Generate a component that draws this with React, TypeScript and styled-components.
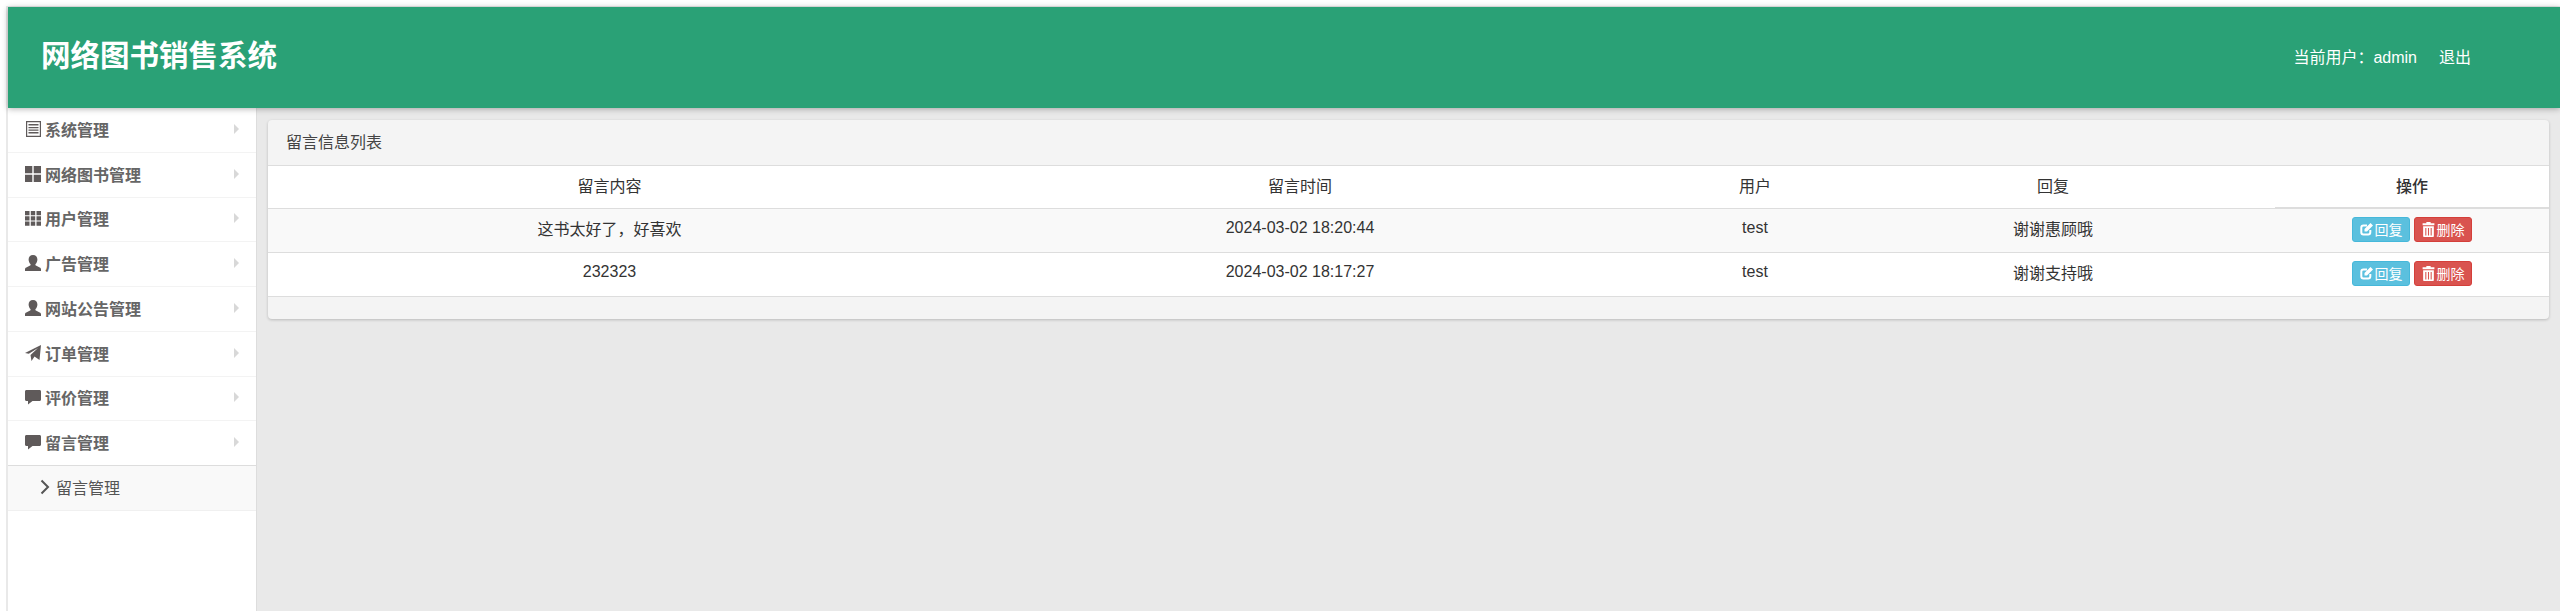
import React, { FC } from 'react'
import styled, { createGlobalStyle } from 'styled-components'

type IconName = 'list' | 'large' | 'grid' | 'user' | 'send' | 'comment'

const menu: { label: string; icon: IconName }[] = [
  { label: '系统管理', icon: 'list' },
  { label: '网络图书管理', icon: 'large' },
  { label: '用户管理', icon: 'grid' },
  { label: '广告管理', icon: 'user' },
  { label: '网站公告管理', icon: 'user' },
  { label: '订单管理', icon: 'send' },
  { label: '评价管理', icon: 'comment' },
  { label: '留言管理', icon: 'comment' },
]

const rows = [
  { content: '这书太好了，好喜欢', time: '2024-03-02 18:20:44', user: 'test', reply: '谢谢惠顾哦' },
  { content: '232323', time: '2024-03-02 18:17:27', user: 'test', reply: '谢谢支持哦' },
]

const MenuIcon: FC<{ name: IconName }> = ({ name }) => (
  <IconSvg viewBox="0 0 16 16">
    {name === 'list' && (
      <path
        fillRule="evenodd"
        d="M1 0h15v16H1zM2.200 1.200v13.600h12.600V1.200zM3.500 3h10v1.500h-10zM3.500 6h10v1.200h-10zM3.500 8.500h10v1.200h-10zM3.500 11h10v1.500h-10z"
      />
    )}
    {name === 'large' && <path d="M0 0h7.300v7.300H0zM8.700 0H16v7.300H8.700zM0 8.700h7.300V16H0zM8.700 8.700H16V16H8.700z" />}
    {name === 'grid' && (
      <path d="M0 1h4.500v4.200H0zM5.800 1h4.400v4.200H5.800zM11.500 1H16v4.200h-4.500zM0 6.300h4.500v4.200H0zM5.800 6.300h4.400v4.200H5.800zM11.500 6.300H16v4.200h-4.500zM0 11.600h4.500v4.200H0zM5.800 11.600h4.400v4.200H5.800zM11.500 11.600H16v4.200h-4.500z" />
    )}
    {name === 'user' && (
      <path d="M8 0c2.800 0 4.400 2 4.400 4.500 0 1.900-.8 3.500-1.800 4.500-.4.500-.3 1.200.3 1.500l3.800 1.900c.9.400 1.300 1 1.300 1.800V16H0v-1.800c0-.8.400-1.400 1.300-1.800l3.800-1.900c.6-.3.700-1 .3-1.500-1-1-1.800-2.600-1.800-4.500C3.600 2 5.200 0 8 0z" />
    )}
    {name === 'send' && <path d="M16 0 14.500 15 9.500 11.500 6.500 16l-1-6L13 3 3.800 8.700 0 8z" />}
    {name === 'comment' && (
      <path d="M1.500 1h13c.9 0 1.500.6 1.500 1.500v8c0 .9-.6 1.500-1.500 1.500H7.500L3 15.500V12H1.500C.6 12 0 11.400 0 10.500v-8C0 1.600.600 1 1.500 1z" />
    )}
  </IconSvg>
)

const App: FC = () => (
  <Page>
    <GlobalStyle />
    <Frame>
      <Header>
        <Brand>网络图书销售系统</Brand>
        <UserBar>
          <span>当前用户：admin</span>
          <span>退出</span>
        </UserBar>
      </Header>
      <Body>
        <Sidebar>
          {menu.map((item) => (
            <MenuRow key={item.label + item.icon}>
              <MenuIcon name={item.icon} />
              <MenuLabel>{item.label}</MenuLabel>
              <Caret />
            </MenuRow>
          ))}
          <SubRow>
            <svg width="10" height="16" viewBox="0 0 10 16" fill="none" stroke="#555" strokeWidth="2">
              <path d="M1.500 1.500 8 8l-6.500 6.500" />
            </svg>
            <span>留言管理</span>
          </SubRow>
        </Sidebar>
        <Content>
          <Panel>
            <PanelTitle>留言信息列表</PanelTitle>
            <Table>
              <thead>
                <tr>
                  <Th $w={683}>留言内容</Th>
                  <Th $w={698}>留言时间</Th>
                  <Th $w={212}>用户</Th>
                  <ReplyTh $w={414}>回复</ReplyTh>
                  <ActionTh>操作</ActionTh>
                </tr>
              </thead>
              <tbody>
                {rows.map((row) => (
                  <tr key={row.time}>
                    <Td>{row.content}</Td>
                    <Td>{row.time}</Td>
                    <Td>{row.user}</Td>
                    <ReplyTd>{row.reply}</ReplyTd>
                    <ActionTd>
                      <ActionButton $bg="#5bc0de" $border="#46b8da">
                        <svg width="13" height="13" viewBox="0 0 13 13" fill="none" stroke="#fff">
                          <path strokeWidth="2" d="M7 2.500H3.500c-1.300 0-2.200.9-2.200 2.200v4.600c0 1.300.9 2.200 2.200 2.200h4.600c1.300 0 2.200-.9 2.200-2.200V7" />
                          <path fill="#fff" strokeWidth="0" d="M10.500 0 13 2.500 7 8.500H4.500V6z" />
                        </svg>
                        回复
                      </ActionButton>
                      <ActionButton $bg="#d9534f" $border="#d43f3a">
                        <svg width="13" height="15" viewBox="0 0 12 14" fill="#fff">
                          <path d="M4 0h4v1.200h3.500V3H.5V1.200H4zM1 4h10v9c0 .6-.4 1-1 1H2c-.6 0-1-.4-1-1zM3 5.500v7h1v-7zM5.500 5.500v7h1v-7zM8 5.500v7h1v-7z" />
                        </svg>
                        删除
                      </ActionButton>
                    </ActionTd>
                  </tr>
                ))}
              </tbody>
            </Table>
            <PanelFooter />
          </Panel>
        </Content>
      </Body>
    </Frame>
  </Page>
)

const font = `"Liberation Sans", Arial, "Noto Sans CJK SC", sans-serif`

const GlobalStyle = createGlobalStyle`
  html, body {
    margin: 0;
    height: 100%;
    background: #fff;
    font-family: ${font};
    font-size: 16px;
    color: #333;
  }
  * {
    box-sizing: border-box;
  }
`
const Page = styled.div`
  height: 611px;
  overflow: hidden;
  padding: 6px 0 0 6px;
`
const Frame = styled.div`
  display: flex;
  flex-direction: column;
  height: 100%;
  padding: 1px 0 0 2px;
  background: #e9e9e9;
`
const Header = styled.header`
  display: flex;
  flex: none;
  align-items: center;
  justify-content: space-between;
  position: relative;
  z-index: 2;
  height: 101px;
  padding: 0 89px 3px 33px;
  background: #2aa176;
  box-shadow: 0 1px 6px rgba(0, 0, 0, 0.3);
  color: #fff;
`
const Brand = styled.h1`
  margin: 0;
  font-size: 29.500px;
  font-weight: 700;
  line-height: 1;
`
const UserBar = styled.div`
  display: flex;
  gap: 22px;
  font-size: 16px;
`
const Body = styled.div`
  display: flex;
  flex: 1;
  min-height: 0;
`
const Sidebar = styled.nav`
  flex: none;
  width: 249px;
  background: #fff;
  border-right: 1px solid #ddd;
`
const MenuRow = styled.div`
  display: flex;
  align-items: center;
  height: 44.750px;
  padding: 0 11px 2px 17px;
  border-bottom: 1px solid #f3f3f3;
  color: #666;
  font-size: 16px;
  font-weight: 700;
`
const IconSvg = styled.svg`
  flex: none;
  width: 16px;
  height: 16px;
  margin-right: 4px;
  fill: #5f5a5a;
`
const MenuLabel = styled.span`
  flex: 1;
`
const Caret = styled.i`
  width: 0;
  height: 0;
  margin-right: 6px;
  border-top: 5px solid transparent;
  border-bottom: 5px solid transparent;
  border-left: 5px solid #d8d8d8;
`
const SubRow = styled.div`
  display: flex;
  align-items: center;
  gap: 6px;
  height: 46px;
  margin-top: -1px;
  padding: 0 0 2px 32px;
  background: #f9f9f9;
  border-top: 1px solid #ddd;
  border-bottom: 1px solid #f0f0f0;
  color: #555;
  font-size: 16px;
`
const Content = styled.main`
  flex: 1;
  min-width: 0;
  padding: 12px 11px 0 11px;
`
const Panel = styled.section`
  background: #f4f4f4;
  border-radius: 4px;
  box-shadow: 0 1px 3px rgba(0, 0, 0, 0.2);
`
const PanelTitle = styled.div`
  height: 46px;
  padding: 0 18px;
  border-bottom: 1px solid #ddd;
  font-size: 16px;
  line-height: 45px;
  color: #444;
`
const Table = styled.table`
  width: 100%;
  border-collapse: collapse;
  table-layout: fixed;
  background: #fff;
  tbody tr:nth-child(odd) {
    background: #f9f9f9;
  }
`
const Th = styled.th<{ $w?: number }>`
  width: ${(p) => (p.$w ? `${p.$w}px` : 'auto')};
  height: 42px;
  padding: 0 0 4px;
  font-size: 16px;
  font-weight: 400;
  text-align: center;
  border-bottom: 1px solid #ddd;
`
const ReplyTh = styled(Th)`
  padding-right: 30px;
`
const ActionTh = styled(Th)`
  font-weight: 500;
  border-bottom: 2px solid #ddd;
`
const Td = styled.td`
  height: 44px;
  padding: 0 0 4px;
  font-size: 16px;
  text-align: center;
  border-bottom: 1px solid #ddd;
`
const ReplyTd = styled(Td)`
  padding-right: 30px;
`
const ActionTd = styled(Td)`
  padding-bottom: 2px;
`
const ActionButton = styled.button<{ $bg: string; $border: string }>`
  display: inline-flex;
  align-items: center;
  justify-content: center;
  gap: 2px;
  width: 58px;
  height: 25px;
  margin: 0 2px;
  padding: 0;
  vertical-align: middle;
  background: ${(p) => p.$bg};
  border: 1px solid ${(p) => p.$border};
  border-radius: 3px;
  color: #fff;
  font-family: inherit;
  font-size: 14px;
`
const PanelFooter = styled.div`
  height: 22px;
`

export default App
